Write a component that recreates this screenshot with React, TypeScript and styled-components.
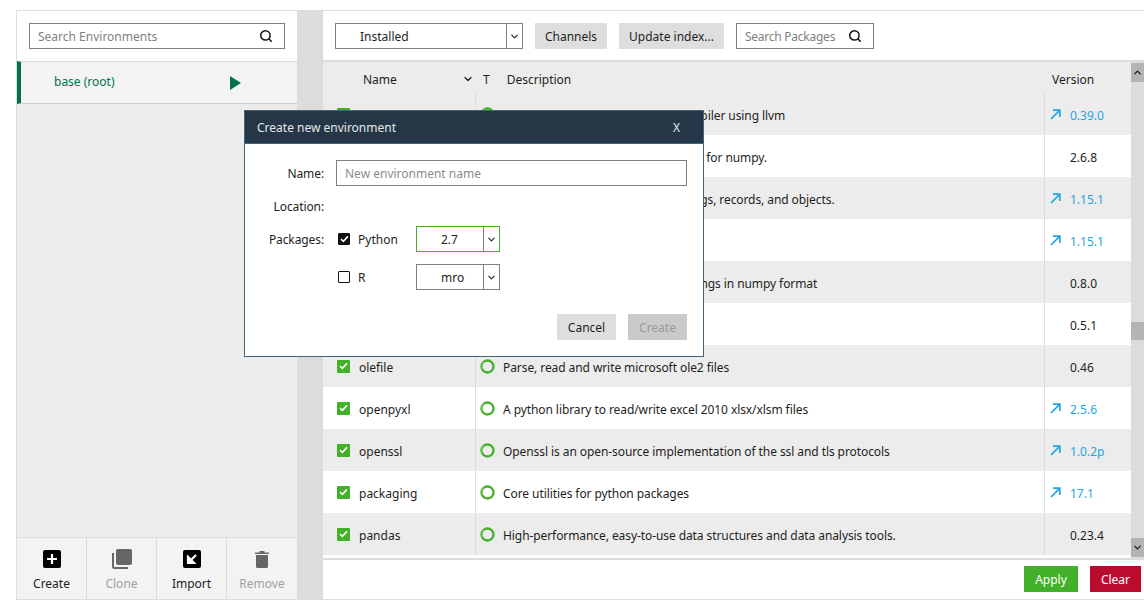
import React from "react";
import styled, { createGlobalStyle } from "styled-components";
import { Search, ChevronDown, ChevronUp } from "lucide-react";

const GlobalStyle = createGlobalStyle`
  html, body {
    margin: 0;
    padding: 0;
    background: #ffffff;
    font-family: "Noto Sans", "Open Sans", sans-serif;
    font-size: 12px;
    color: #1e1e1e;
  }
  * { box-sizing: border-box; }
`;

interface Pkg {
  name: string;
  description: string;
  version: string;
  update?: boolean;
}

const packages: Pkg[] = [
  { name: "numba", description: "NumPy aware dynamic Python compiler using llvm", version: "0.39.0", update: true },
  { name: "numexpr", description: "Fast numerical expression evaluator for numpy.", version: "2.6.8" },
  { name: "numpy", description: "Array processing for numbers, strings, records, and objects.", version: "1.15.1", update: true },
  { name: "numpy-base", description: "", version: "1.15.1", update: true },
  { name: "numpydoc", description: "Sphinx extension to support docstrings in numpy format", version: "0.8.0" },
  { name: "odo", description: "", version: "0.5.1" },
  { name: "olefile", description: "Parse, read and write microsoft ole2 files", version: "0.46" },
  { name: "openpyxl", description: "A python library to read/write excel 2010 xlsx/xlsm files", version: "2.5.6", update: true },
  { name: "openssl", description: "Openssl is an open-source implementation of the ssl and tls protocols", version: "1.0.2p", update: true },
  { name: "packaging", description: "Core utilities for python packages", version: "17.1", update: true },
  { name: "pandas", description: "High-performance, easy-to-use data structures and data analysis tools.", version: "0.23.4" },
];

const COLUMNS = "153px 569px 86px";

const Page = styled.div`
  display: flex;
  height: 601px;
  width: 1144px;
  padding: 10px 0 1px 16px;
  overflow: hidden;
`;

const Sidebar = styled.aside`
  width: 281px;
  display: flex;
  flex-direction: column;
  border-top: 1px solid #dedede;
  border-left: 1px solid #dedede;
  border-bottom: 1px solid #dedede;
  background: #ececec;
`;

const SearchRow = styled.div`
  height: 50px;
  flex: none;
  background: #fff;
  padding: 12px 12px 0 12px;
`;

const SearchBox = styled.div<{ $width: number }>`
  width: ${(p) => p.$width}px;
  height: 26px;
  flex: none;
  border: 1px solid #7f7f7f;
  background: #fff;
  display: flex;
  align-items: center;
  justify-content: space-between;
  padding: 0 11px 0 8px;
  color: #7f7f7f;
  svg { color: #111; }
`;

const EnvRow = styled.div`
  height: 43px;
  flex: none;
  display: flex;
  align-items: center;
  background: #f3f3f3;
  border-top: 1px solid #dcdcdc;
  border-bottom: 1px solid #cfcfcf;
  border-left: 4px solid #00734a;
  padding-left: 33px;
  color: #00734a;
`;

const EnvName = styled.span`
  width: 176px;
  padding-bottom: 2px;
`;

const PlayIcon = styled.span`
  width: 0;
  height: 0;
  border-left: 11px solid #00734a;
  border-top: 7px solid transparent;
  border-bottom: 7px solid transparent;
`;

const EnvSpacer = styled.div`
  flex: 1;
`;

const EnvActions = styled.div`
  height: 62px;
  flex: none;
  display: grid;
  grid-template-columns: 69px 70px 70px 1fr;
  background: #f3f3f3;
  border-top: 1px solid #dcdcdc;
`;

const EnvAction = styled.div<{ $disabled?: boolean }>`
  display: flex;
  flex-direction: column;
  align-items: center;
  padding-top: 11px;
  gap: 6px;
  color: ${(p) => (p.$disabled ? "#a0a0a0" : "#1e1e1e")};
  & + & { border-left: 1px solid #dcdcdc; }
`;

const ActionIcon = styled.span`
  height: 20px;
  display: flex;
  align-items: center;
`;

const Gutter = styled.div`
  width: 26px;
  flex: none;
  background: #dcdcdc;
`;

const Main = styled.main`
  flex: 1;
  display: flex;
  flex-direction: column;
  min-width: 0;
  border-top: 1px solid #dedede;
  border-bottom: 1px solid #dedede;
`;

const Toolbar = styled.div`
  height: 51px;
  flex: none;
  display: flex;
  align-items: flex-start;
  padding: 12px 0 0 12px;
  border-bottom: 2px solid #dcdcdc;
`;

const Select = styled.div<{ $width: number; $active?: boolean; $pad: number }>`
  width: ${(p) => p.$width}px;
  height: 26px;
  flex: none;
  display: flex;
  align-items: center;
  background: #fff;
  border: 1px solid ${(p) => (p.$active ? "#43b02a" : "#7f7f7f")};
  padding-left: ${(p) => p.$pad}px;
`;

const SelectValue = styled.span`
  flex: 1;
`;

const SelectArrow = styled.span`
  width: 16px;
  height: 100%;
  flex: none;
  display: flex;
  align-items: center;
  justify-content: center;
  border-left: 1px solid #7f7f7f;
  color: #222;
`;

const ToolButton = styled.button<{ $width: number }>`
  width: ${(p) => p.$width}px;
  height: 26px;
  flex: none;
  border: none;
  background: #dedede;
  font: inherit;
  color: #1e1e1e;
  padding: 0;
  margin-left: 12px;
`;

const ToolSearch = styled(SearchBox)`
  margin-left: 12px;
  letter-spacing: -0.25px;
`;

const TableArea = styled.div`
  height: 498px;
  flex: none;
  display: flex;
  border-bottom: 2px solid #dcdcdc;
`;

const Table = styled.div`
  flex: 1;
  min-width: 0;
  background: #fff;
  overflow: hidden;
`;

const HeadRow = styled.div`
  height: 31px;
  display: grid;
  grid-template-columns: ${COLUMNS};
  align-items: center;
  padding-top: 3px;
  background: #ececec;
`;

const HeadName = styled.div`
  display: flex;
  align-items: center;
  justify-content: space-between;
  padding: 0 2px 0 40px;
`;

const HeadDesc = styled.div`
  display: flex;
  gap: 17px;
  padding-left: 7px;
`;

const HeadVersion = styled.div`
  padding-left: 7px;
`;

const Row = styled.div<{ $odd: boolean }>`
  height: 42px;
  display: grid;
  grid-template-columns: ${COLUMNS};
  background: ${(p) => (p.$odd ? "#fff" : "#ececec")};
`;

const CellText = styled.span`
  padding-top: 2px;
`;

const NameCell = styled.div`
  display: flex;
  align-items: center;
  gap: 9px;
  padding-left: 14px;
  border-right: 1px solid #dcdcdc;
`;

const Checkbox = styled.span`
  width: 13px;
  height: 13px;
  flex: none;
  border-radius: 1px;
  background: #43b02a;
  display: flex;
  align-items: center;
  justify-content: center;
`;

const DescCell = styled.div`
  display: flex;
  align-items: center;
  gap: 8px;
  padding-left: 4px;
  white-space: nowrap;
  letter-spacing: -0.08px;
  border-right: 1px solid #dcdcdc;
`;

const VersionCell = styled.div<{ $update?: boolean }>`
  display: flex;
  align-items: center;
  padding-left: 5px;
  color: ${(p) => (p.$update ? "#1ea7e1" : "#1e1e1e")};
`;

const VersionText = styled(CellText)`
  margin-left: 9px;
`;

const VersionPlain = styled(CellText)`
  margin-left: 20px;
`;

const Scrollbar = styled.div`
  width: 13px;
  flex: none;
  position: relative;
  background: #dcdcdc;
  display: flex;
  flex-direction: column;
  justify-content: space-between;
  padding: 1px 0;
`;

const ScrollEnd = styled.div`
  height: 19px;
  background: #b4b4b4;
  display: flex;
  align-items: center;
  justify-content: center;
  color: #111;
`;

const ScrollThumb = styled.div`
  position: absolute;
  top: 260px;
  left: 0;
  right: 0;
  height: 18px;
  background: #b4b4b4;
`;

const Footer = styled.div`
  flex: 1;
  display: flex;
  justify-content: flex-end;
  align-items: flex-start;
  gap: 12px;
  padding: 6px 3px 0 0;
`;

const FooterButton = styled.button<{ $color: string; $width: number }>`
  height: 26px;
  width: ${(p) => p.$width}px;
  border: none;
  color: #fff;
  background: ${(p) => p.$color};
  font: inherit;
  padding: 0;
`;

const Modal = styled.div`
  position: absolute;
  left: 244px;
  top: 110px;
  width: 460px;
  height: 247px;
  background: #fff;
  border: 1px solid #43657a;
  display: flex;
  flex-direction: column;
`;

const ModalHeader = styled.div`
  height: 33px;
  flex: none;
  display: flex;
  align-items: center;
  justify-content: space-between;
  padding: 0 23px 0 12px;
  background: #253746;
  border-bottom: 1px solid #43657a;
  color: #e4e8eb;
`;

const ModalBody = styled.div`
  flex: 1;
  display: grid;
  grid-template-columns: 79px 1fr;
  grid-template-rows: 26px 26px 26px 31px;
  column-gap: 12px;
  row-gap: 7px;
  padding: 16px 16px 0 0;
  align-items: center;
`;

const FieldLabel = styled.div`
  text-align: right;
  letter-spacing: -0.1px;
`;

const NameInput = styled.div`
  height: 26px;
  border: 1px solid #7f7f7f;
  display: flex;
  align-items: center;
  padding-left: 8px;
  color: #8c8c8c;
`;

const PackageRow = styled.div<{ $offset?: number }>`
  display: grid;
  grid-template-columns: 12px 50px 84px;
  column-gap: 8px;
  align-items: center;
  padding-left: 2px;
  margin-top: ${(p) => p.$offset ?? 0}px;
`;

const DarkCheck = styled.span<{ $checked?: boolean }>`
  width: 12px;
  height: 12px;
  border-radius: 1px;
  border: 1.5px solid #111;
  background: ${(p) => (p.$checked ? "#111" : "#fff")};
  display: flex;
  align-items: center;
  justify-content: center;
`;

const ModalFooter = styled.div`
  display: flex;
  justify-content: flex-end;
  gap: 12px;
  padding: 0 16px 16px 0;
`;

const ModalButton = styled.button<{ $disabled?: boolean }>`
  width: 59px;
  height: 26px;
  border: none;
  padding: 0;
  font: inherit;
  background: ${(p) => (p.$disabled ? "#cacaca" : "#dedede")};
  color: ${(p) => (p.$disabled ? "#9a9a9a" : "#1e1e1e")};
`;

const Tick = ({ color = "#fff" }: { color?: string }) => (
  <svg width="9" height="8" viewBox="0 0 9 8">
    <path d="M1 4.2 L3.4 6.4 L8 1.4" fill="none" stroke={color} strokeWidth="1.6" />
  </svg>
);

const Ring = () => (
  <svg width="15" height="15" viewBox="0 0 15 15" style={{ flex: "none" }}>
    <circle cx="7.5" cy="7.5" r="6" fill="none" stroke="#43b02a" strokeWidth="2.3" />
    <path d="M2 9.500A6 6 0 0 1 4.500 2.300" fill="none" stroke="#7fcb6b" strokeWidth="2.3" strokeDasharray="1.500 1" />
  </svg>
);

const UpdateArrow = () => (
  <svg width="11" height="11" viewBox="0 0 11 11" style={{ flex: "none" }}>
    <path d="M1 10 L9.600 1.400 M3 1.200 H9.800 V8" fill="none" stroke="#1ea7e1" strokeWidth="1.700" />
  </svg>
);

const CreateIcon = () => (
  <svg width="18" height="18" viewBox="0 0 18 18">
    <rect width="18" height="18" rx="2" fill="#000" />
    <path d="M9 4v10M4 9h10" stroke="#fff" strokeWidth="2.200" />
  </svg>
);

const CloneIcon = () => (
  <svg width="20" height="20" viewBox="0 0 20 20">
    <rect x="4" y="0" width="16" height="16" rx="2" fill="#666" />
    <path d="M1 4v13.500a1.500 1.500 0 0 0 1.500 1.500H16" fill="none" stroke="#666" strokeWidth="2" />
  </svg>
);

const ImportIcon = () => (
  <svg width="18" height="18" viewBox="0 0 18 18">
    <rect width="18" height="18" rx="2" fill="#000" />
    <path d="M13 5 L7.500 10.500 M5 7 V13 H11 Z" stroke="#fff" strokeWidth="2.200" fill="#fff" />
  </svg>
);

const RemoveIcon = () => (
  <svg width="16" height="18" viewBox="0 0 16 18">
    <path d="M1 2.500h14v1.500H1z M5.500 1h5v1.500h-5z" fill="#666" />
    <path d="M2 5h12v11.500a1.500 1.500 0 0 1-1.500 1.500h-9A1.500 1.500 0 0 1 2 16.500z" fill="#666" />
  </svg>
);

export default function App() {
  return (
    <>
      <GlobalStyle />
      <Page>
        <Sidebar>
          <SearchRow>
            <SearchBox $width={256}>
              Search Environments
              <Search size={14} strokeWidth={2.6} />
            </SearchBox>
          </SearchRow>
          <EnvRow>
            <EnvName>base (root)</EnvName>
            <PlayIcon />
          </EnvRow>
          <EnvSpacer />
          <EnvActions>
            <EnvAction>
              <ActionIcon><CreateIcon /></ActionIcon>
              Create
            </EnvAction>
            <EnvAction $disabled>
              <ActionIcon><CloneIcon /></ActionIcon>
              Clone
            </EnvAction>
            <EnvAction>
              <ActionIcon><ImportIcon /></ActionIcon>
              Import
            </EnvAction>
            <EnvAction $disabled>
              <ActionIcon><RemoveIcon /></ActionIcon>
              Remove
            </EnvAction>
          </EnvActions>
        </Sidebar>
        <Gutter />
        <Main>
          <Toolbar>
            <Select $width={188} $pad={24}>
              <SelectValue>Installed</SelectValue>
              <SelectArrow>
                <ChevronDown size={11} strokeWidth={2.5} />
              </SelectArrow>
            </Select>
            <ToolButton $width={72}>Channels</ToolButton>
            <ToolButton $width={105}>Update index...</ToolButton>
            <ToolSearch $width={138}>
              Search Packages
              <Search size={14} strokeWidth={2.6} />
            </ToolSearch>
          </Toolbar>
          <TableArea>
            <Table>
              <HeadRow>
                <HeadName>
                  Name
                  <ChevronDown size={12} strokeWidth={2.5} />
                </HeadName>
                <HeadDesc>
                  <span>T</span>
                  <span>Description</span>
                </HeadDesc>
                <HeadVersion>Version</HeadVersion>
              </HeadRow>
              {packages.map((pkg, i) => (
                <Row key={pkg.name} $odd={i % 2 === 1}>
                  <NameCell>
                    <Checkbox>
                      <Tick />
                    </Checkbox>
                    <CellText>{pkg.name}</CellText>
                  </NameCell>
                  <DescCell>
                    <Ring />
                    <CellText>{pkg.description}</CellText>
                  </DescCell>
                  <VersionCell $update={pkg.update}>
                    {pkg.update ? (
                      <>
                        <UpdateArrow />
                        <VersionText>{pkg.version}</VersionText>
                      </>
                    ) : (
                      <VersionPlain>{pkg.version}</VersionPlain>
                    )}
                  </VersionCell>
                </Row>
              ))}
            </Table>
            <Scrollbar>
              <ScrollEnd>
                <ChevronUp size={11} strokeWidth={2.5} />
              </ScrollEnd>
              <ScrollThumb />
              <ScrollEnd>
                <ChevronDown size={11} strokeWidth={2.5} />
              </ScrollEnd>
            </Scrollbar>
          </TableArea>
          <Footer>
            <FooterButton $color="#43b02a" $width={54}>Apply</FooterButton>
            <FooterButton $color="#ba0c2f" $width={51}>Clear</FooterButton>
          </Footer>
        </Main>
      </Page>
      <Modal>
        <ModalHeader>
          <span>Create new environment</span>
          <span>X</span>
        </ModalHeader>
        <ModalBody>
          <FieldLabel>Name:</FieldLabel>
          <NameInput>New environment name</NameInput>
          <FieldLabel>Location:</FieldLabel>
          <div />
          <FieldLabel>Packages:</FieldLabel>
          <PackageRow>
            <DarkCheck $checked>
              <Tick />
            </DarkCheck>
            <span>Python</span>
            <Select $width={84} $active $pad={24}>
              <SelectValue>2.7</SelectValue>
              <SelectArrow>
                <ChevronDown size={11} strokeWidth={2.5} />
              </SelectArrow>
            </Select>
          </PackageRow>
          <div />
          <PackageRow $offset={5}>
            <DarkCheck />
            <span>R</span>
            <Select $width={84} $pad={24}>
              <SelectValue>mro</SelectValue>
              <SelectArrow>
                <ChevronDown size={11} strokeWidth={2.5} />
              </SelectArrow>
            </Select>
          </PackageRow>
        </ModalBody>
        <ModalFooter>
          <ModalButton>Cancel</ModalButton>
          <ModalButton $disabled>Create</ModalButton>
        </ModalFooter>
      </Modal>
    </>
  );
}
